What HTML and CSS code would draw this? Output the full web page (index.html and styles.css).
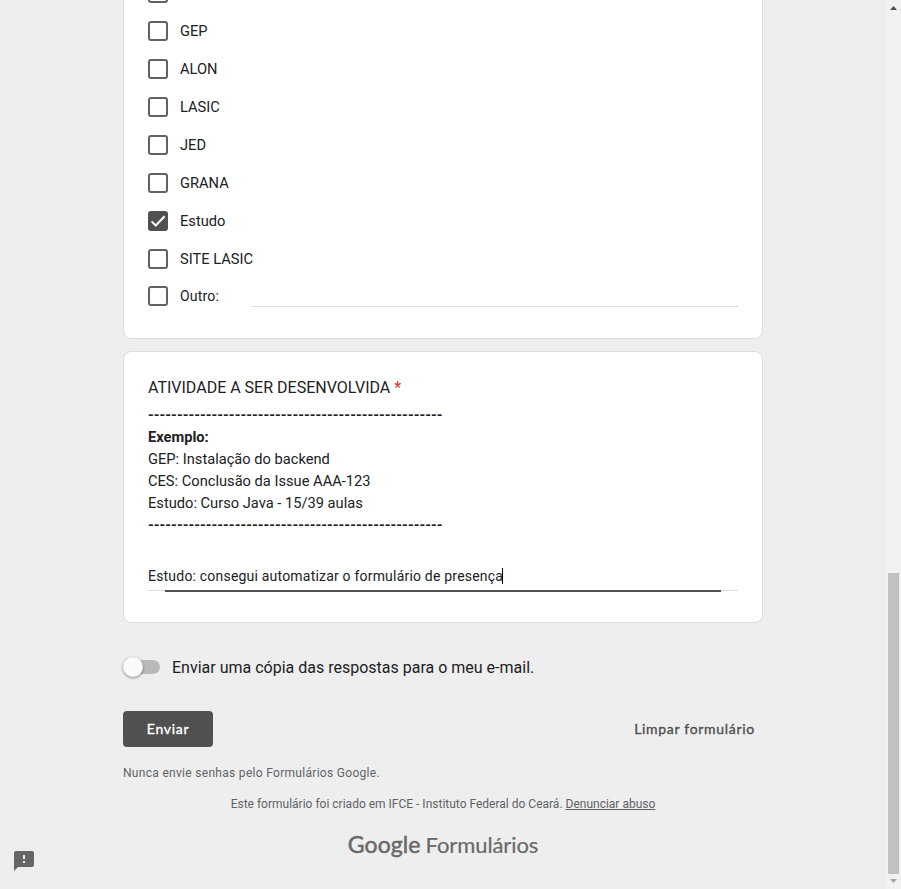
FILE: index.html
```html
<!DOCTYPE html>
<html lang="pt-BR">
<head>
<meta charset="utf-8">
<title>Formulário</title>
<link rel="stylesheet" href="styles.css">
</head>
<body>
<div class="viewport">
<main class="page">
  <section class="card options">
    <div class="option"><span class="box"></span></div>
    <label class="option"><span class="box"></span><span>GEP</span></label>
    <label class="option"><span class="box"></span><span>ALON</span></label>
    <label class="option"><span class="box"></span><span>LASIC</span></label>
    <label class="option"><span class="box"></span><span>JED</span></label>
    <label class="option"><span class="box"></span><span>GRANA</span></label>
    <label class="option"><span class="box checked"><svg width="20" height="20" viewBox="0 0 20 20"><path d="M3.6 10.4 7.7 14.5 16.6 5.2" fill="none" stroke="#fff" stroke-width="2"/></svg></span><span>Estudo</span></label>
    <label class="option"><span class="box"></span><span>SITE LASIC</span></label>
    <label class="option other"><span class="box"></span><span class="other-label">Outro:</span><span class="other-line"></span></label>
  </section>

  <section class="card activity">
    <h2>ATIVIDADE A SER DESENVOLVIDA <span class="required">*</span></h2>
    <div class="description">
      <b class="dashes">---------------------------------------------------</b>
      <b class="example">Exemplo:</b>
      <span>GEP: Instalação do backend</span>
      <span>CES: Conclusão da Issue AAA-123</span>
      <span>Estudo: Curso Java - 15/39 aulas</span>
      <b class="dashes">---------------------------------------------------</b>
    </div>
    <div class="answer"><span class="answer-text">Estudo: consegui automatizar o formulário de presença</span><span class="caret"></span></div>
    <div class="underline"><div class="focus"></div></div>
  </section>

  <div class="copy"><span class="switch"><span class="knob"></span></span><span class="copy-text">Enviar uma cópia das respostas para o meu e-mail.</span></div>
  <div class="actions"><button class="submit"><span>Enviar</span></button><span class="clear">Limpar formulário</span></div>
  <p class="warning">Nunca envie senhas pelo Formulários Google.</p>
  <p class="legal"><span>Este formulário foi criado em IFCE - Instituto Federal do Ceará. <a>Denunciar abuso</a></span></p>
  <div class="logo"><span class="google">Google</span><span class="forms">Formulários</span></div>
</main>
<div class="report"><svg width="20" height="20" viewBox="0 0 20 20"><path fill="#666" fill-rule="evenodd" d="M2 0H18Q20 0 20 2V14Q20 16 18 16H4L0 20V2Q0 0 2 0ZM9 4V8H11V4ZM9 10V12H11V10Z"/></svg></div>
<div class="scrollbar">
  <svg width="15" height="15" viewBox="0 0 15 15"><path fill="#505050" d="M4 10 7.5 6 11 10Z"/></svg>
  <div class="thumb"></div>
  <svg width="15" height="15" viewBox="0 0 15 15"><path fill="#a3a3a3" d="M4 5H11L7.5 9Z"/></svg>
</div>
</div>
</body>
</html>
```

FILE: styles.css
```css
* { box-sizing: border-box; }
body { margin: 0; background: #eee; color: #202124; font-family: Roboto, "Liberation Sans", sans-serif; font-size: 14px; }
.viewport { position: relative; height: 889px; overflow: hidden; padding-left: 123px; }
.page { width: 640px; }
.card { background: #fff; border: 1px solid #dadce0; border-radius: 8px; padding: 0 24px; }
.options { height: 366px; margin-top: -27px; }
.option { display: flex; align-items: center; height: 38px; font-size: 11pt; }
.box { width: 20px; height: 20px; border: 2px solid #5f6368; border-radius: 3px; margin-right: 12px; flex: none; }
.checked { border: 0; background: #505050; }
.checked svg { display: block; }
.other { height: 36px; font-size: 14px; letter-spacing: .2px; }
.other-label { width: 71px; }
.other-line { width: 487px; height: 1px; background: #dadce0; margin-top: 20px; }
.activity { margin-top: 12px; height: 272px; padding-top: 24px; }
h2 { margin: 0; font-size: 16px; font-weight: 400; line-height: 24px; }
.required { color: #d93025; }
.description { display: flex; flex-direction: column; align-items: flex-start; font-size: 11pt; line-height: 22px; margin-top: 4px; }
.answer { display: flex; align-items: center; height: 24px; margin-top: 28px; letter-spacing: .2px; }
.caret { width: 1px; height: 16px; margin-left: -1px; background: #000; }
.underline { height: 2px; margin-top: 2px; background: linear-gradient(#dadce0 1px, transparent 1px); }
.focus { height: 2px; margin: 0 17px; background: #505050; }
.copy { display: flex; align-items: center; height: 24px; margin-top: 32px; font-size: 16px; }
.switch { width: 37px; height: 14px; margin-right: 12px; border-radius: 7px; background: linear-gradient(90deg, transparent 10px, #b9b9b9 10px); display: flex; align-items: center; }
.knob { width: 20px; height: 20px; border-radius: 50%; background: #fafafa; box-shadow: 0 1px 3px rgba(0,0,0,.45); }
.actions { display: flex; align-items: center; justify-content: space-between; margin-top: 32px; height: 36px; padding-right: 8px; font-family: Lato, sans-serif; font-size: 14px; letter-spacing: .7px; -webkit-text-stroke: .35px; }
.actions span { display: block; margin-top: -1px; }
.submit { width: 90px; height: 36px; border: 0; border-radius: 4px; background: #505050; color: #fff; padding: 0; font: inherit; letter-spacing: inherit; }
.clear { color: #505050; }
.warning { margin: 18px 0 0; font-size: 12px; line-height: 16px; letter-spacing: .3px; color: #5f6368; }
.legal { margin: 15px 0 0; font-size: 12px; line-height: 16px; text-align: center; color: #5f6368; }
.legal a { text-decoration: underline; }
.logo { display: flex; justify-content: center; align-items: baseline; gap: 5px; margin-top: 17px; line-height: 30px; font-family: Lato, sans-serif; font-size: 22px; color: #696969; -webkit-text-stroke: .2px; }
.google { font-size: 23px; letter-spacing: .1px; -webkit-text-stroke: .5px; }
.forms { letter-spacing: -.1px; }
.report { position: absolute; left: 14px; top: 851px; }
.report svg { display: block; }
.scrollbar { position: absolute; right: 0; top: 0; width: 15px; height: 889px; background: #f1f1f1; display: flex; flex-direction: column; }
.scrollbar svg { display: block; flex: none; }
.thumb { width: 11px; height: 301px; margin: auto 2px 0; background: #c1c1c1; }
```
